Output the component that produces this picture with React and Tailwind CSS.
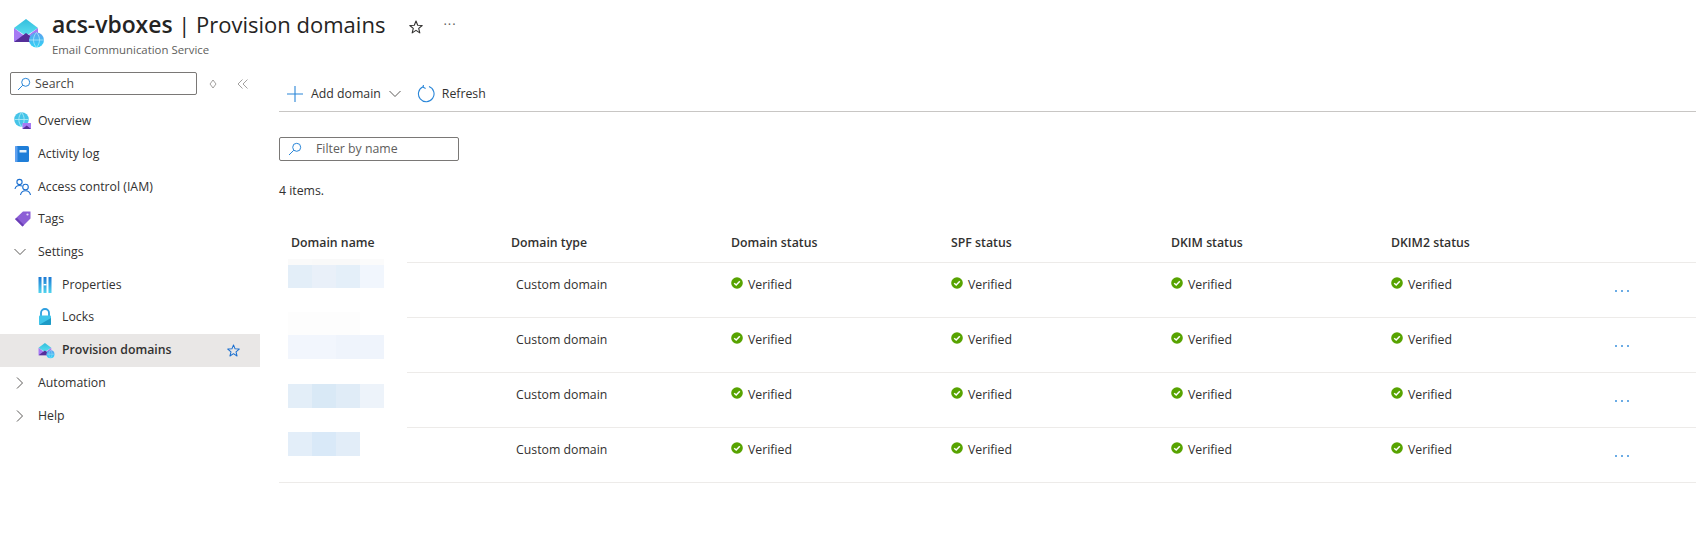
import React from 'react';

const FONT = "font-['Open_Sans','Noto_Sans',sans-serif]";

const ROWS = [
  {
    bands: [
      { top: -4, height: 6, colors: ['#fafafa', '#f9f9f9', '#f9f9f9', '#fbfbfb'] },
      { top: 2, height: 23, colors: ['#e3eef8', '#e9f0f9', '#e4eff9', '#f1f6fd'] },
    ],
  },
  {
    bands: [
      { top: -6, height: 23, colors: ['#fdfdfd', '#fdfdfd', '#fdfdfd', '#ffffff'] },
      { top: 17, height: 24, colors: ['#f2f6fd', '#f2f6fd', '#eff4fc', '#eff4fc'] },
    ],
  },
  { bands: [{ top: 11, height: 24, colors: ['#e3eef8', '#d9e9f6', '#e0ecf7', '#edf3fa'] }] },
  { bands: [{ top: 4, height: 24, colors: ['#e3eef9', '#d9e9f8', '#e2edf8'] }] },
];

function EmailIcon({ size = 32 }) {
  return (
    <svg width={size} height={size} viewBox="0 0 32 32" className="shrink-0">
      <defs>
        <linearGradient id="flap" x1="0" y1="0" x2="0" y2="1">
          <stop offset="0" stopColor="#32bedd" />
          <stop offset="1" stopColor="#5ee0f0" />
        </linearGradient>
        <linearGradient id="globe" x1="0" y1="0" x2="0" y2="1">
          <stop offset="0" stopColor="#5ea0ef" />
          <stop offset="1" stopColor="#32d4f5" />
        </linearGradient>
      </defs>
      <path d="M1 11 L13 2 L25 11 L13 19 Z" fill="url(#flap)" />
      <path d="M1 11 L13 20 L25 11 V25 H2 a1 1 0 0 1 -1 -1 Z" fill="#a67af4" />
      <path d="M1 25 L13 16 L25 25 Z" fill="#552f99" />
      <circle cx="23.5" cy="23" r="7.5" fill="url(#globe)" />
      <path d="M16 23 H31 M23.5 15.5 C19.5 20 19.5 26 23.5 30.5 C27.5 26 27.5 20 23.5 15.5" fill="none" stroke="#b8ecfa" strokeWidth="0.7" />
    </svg>
  );
}

function OverviewIcon() {
  return (
    <svg width="18" height="18" viewBox="0 0 18 18">
      <circle cx="7.5" cy="7.5" r="7.3" fill="#45c4e8" />
      <path d="M0.5 7.5 H14.5 M7.5 0.5 C4 4 4 11 7.5 14.5 C11 11 11 4 7.5 0.5" fill="none" stroke="#b5ecf8" strokeWidth="0.8" />
      <path d="M8.5 11 H17 V17 H8.5 Z" fill="#a67af4" />
      <path d="M8.5 17 L12.7 13.5 L17 17 Z" fill="#552f99" />
    </svg>
  );
}

function ActivityIcon() {
  return (
    <svg width="16" height="18" viewBox="0 0 16 18">
      <rect x="1" y="1" width="14" height="16" rx="1.5" fill="#1f7ed8" />
      <rect x="1" y="1" width="2.5" height="16" rx="1" fill="#5ea0ef" />
      <rect x="5.5" y="5" width="7" height="2.5" fill="#e6f2fb" />
    </svg>
  );
}

function AccessIcon() {
  return (
    <svg width="18" height="18" viewBox="0 0 18 18" fill="none" stroke="#1a6fd0" strokeWidth="1.1">
      <circle cx="5.5" cy="4" r="2.6" />
      <path d="M1 11 C1.5 8.5 3.5 7.5 5.5 7.5 C6.5 7.5 7.2 7.7 8 8.1" />
      <circle cx="11.5" cy="9" r="2.8" />
      <path d="M6.5 17 C7 14 9 12.7 11.5 12.7 C14 12.7 16 14 16.5 17" />
    </svg>
  );
}

function TagIcon() {
  return (
    <svg width="18" height="18" viewBox="0 0 18 18">
      <path d="M1 9 L9 1.5 H16.5 V8.5 L8.5 16.5 Z" fill="#8c5fd6" />
      <path d="M1 9 L8.5 16.5 L10 15 L3 8 Z" fill="#6a3fb5" />
      <circle cx="13.5" cy="4.5" r="1.1" fill="#e6dcf7" />
    </svg>
  );
}

function PropertiesIcon() {
  return (
    <svg width="14" height="18" viewBox="0 0 14 18">
      <defs>
        <linearGradient id="bars" x1="0" y1="0" x2="0" y2="1">
          <stop offset="0" stopColor="#1b78d4" />
          <stop offset="1" stopColor="#50d4ee" />
        </linearGradient>
      </defs>
      <rect x="0.5" y="1" width="3" height="16" fill="url(#bars)" />
      <rect x="5.5" y="1" width="3" height="16" fill="url(#bars)" />
      <rect x="10.5" y="1" width="3" height="16" fill="url(#bars)" />
      <rect x="5.5" y="8" width="3" height="1.4" fill="#ffffff" />
    </svg>
  );
}

function LockIcon() {
  return (
    <svg width="14" height="18" viewBox="0 0 14 18">
      <path d="M3 8 V5 a4 4 0 0 1 8 0 V8" fill="none" stroke="#2f9fe0" strokeWidth="1.8" />
      <rect x="1" y="7.5" width="12" height="9.5" rx="1" fill="#3fc5ea" />
      <path d="M1 17 L13 10 V16 a1 1 0 0 1 -1 1 Z" fill="#1d9ac6" />
    </svg>
  );
}

function SearchIcon({ className = '' }) {
  return (
    <svg width="14" height="14" viewBox="0 0 14 14" fill="none" stroke="#2a86d8" strokeWidth="1" className={className}>
      <circle cx="8.7" cy="5.3" r="4" />
      <path d="M5.8 8.2 L1 13" />
    </svg>
  );
}

function ChevronDown({ size = 12, color = '#4a4846' }) {
  return (
    <svg width={size} height={size} viewBox="0 0 12 12" fill="none" stroke={color} strokeWidth="0.9">
      <path d="M0.5 3 L6 8.5 L11.5 3" />
    </svg>
  );
}

function ChevronRight() {
  return (
    <svg width="12" height="12" viewBox="0 0 12 12" fill="none" stroke="#4a4846" strokeWidth="0.9">
      <path d="M3 0.5 L8.5 6 L3 11.5" />
    </svg>
  );
}

function Star({ color = '#323130', size = 14 }) {
  return (
    <svg width={size} height={size} viewBox="0 0 14 14" fill="none" stroke={color} strokeWidth="1.1" strokeLinejoin="round">
      <path d="M7 1 L8.7 5.2 L13.2 5.5 L9.7 8.4 L10.8 12.9 L7 10.4 L3.2 12.9 L4.3 8.4 L0.8 5.5 L5.3 5.2 Z" />
    </svg>
  );
}

function VerifiedIcon() {
  return (
    <svg width="12" height="12" viewBox="0 0 12 12" className="mt-[2px] shrink-0">
      <circle cx="6" cy="6" r="5.8" fill="#57a300" />
      <path d="M3.2 6.2 L5.2 8 L8.8 4.2" fill="none" stroke="#ffffff" strokeWidth="1.5" />
    </svg>
  );
}

function Status() {
  return (
    <div className="flex items-start gap-[5px] text-[#323130]">
      <VerifiedIcon />
      <span>Verified</span>
    </div>
  );
}

function NavItem({ icon, label, sub, active, chevron }) {
  return (
    <div className={`flex h-[32.7px] items-center ${sub ? 'pl-[38px]' : 'pl-[14px]'} ${active ? 'bg-[#e9e7e6] font-semibold' : ''}`}>
      <span className="flex w-[24px] shrink-0 items-center justify-start">{chevron || icon}</span>
      <span className="flex-1 text-[#323130]">{label}</span>
      {active && (
        <span className="mr-[20px] flex">
          <Star color="#1a6fd0" size={13} />
        </span>
      )}
    </div>
  );
}

function Redacted({ bands }) {
  return (
    <div className="absolute left-0 top-[-1px] h-[55px] w-[128px] bg-white">
      {bands.map((band, i) => (
        <div key={i} className="absolute left-[9px] flex" style={{ top: band.top + 1, height: band.height }}>
          {band.colors.map((c, j) => (
            <div key={j} className="h-full w-[24px]" style={{ background: c }} />
          ))}
        </div>
      ))}
    </div>
  );
}

const COLS = 'grid grid-cols-[220px_220px_220px_220px_220px_223px_1fr] pl-[12px]';

export default function App() {
  return (
    <div className={`${FONT} h-[553px] w-[1696px] overflow-hidden bg-white text-[12.3px] leading-[20px] text-[#323130]`}>
      {/* Header */}
      <div className="flex h-[64px] items-start pl-[13px] pt-[14px]">
        <div className="mt-[3px]">
          <EmailIcon />
        </div>
        <div className="ml-[7px] mt-[-4px]">
          <div className="text-[22px] leading-[28px] text-[#252423]">
            <span className="text-[22.9px] font-semibold">acs-vboxes</span> | Provision domains
          </div>
          <div className="mt-[3px] text-[11.4px] leading-[16px] text-[#605e5c]">Email Communication Service</div>
        </div>
        <div className="ml-[24px] flex items-center">
          <Star />
          <span className="mb-[6px] ml-[20px] text-[13px] tracking-[1px] text-[#605e5c]">···</span>
        </div>
      </div>

      <div className="flex">
        {/* Sidebar */}
        <div className="w-[260px] shrink-0">
          <div className="flex items-center pl-[10px] pt-[8px]">
            <div className="flex h-[23px] w-[187px] items-center gap-[4px] rounded-[2px] border border-[#7a7876] pl-[6px] text-[#4a4846]">
              <SearchIcon />
              <span>Search</span>
            </div>
            <svg width="8" height="10" viewBox="0 0 8 10" fill="none" stroke="#8a8886" strokeWidth="0.8" className="ml-[12px]">
              <path d="M4 1 L7 5 L4 9 L1 5 Z" />
            </svg>
            <svg width="12" height="10" viewBox="0 0 12 10" fill="none" stroke="#8a8886" strokeWidth="0.8" className="ml-[20px]">
              <path d="M5.5 0.5 L1 5 L5.5 9.5 M10.5 0.5 L6 5 L10.5 9.5" />
            </svg>
          </div>
          <div className="mt-[10px]">
            <NavItem icon={<OverviewIcon />} label="Overview" />
            <NavItem icon={<ActivityIcon />} label="Activity log" />
            <NavItem icon={<AccessIcon />} label="Access control (IAM)" />
            <NavItem icon={<TagIcon />} label="Tags" />
            <NavItem chevron={<ChevronDown />} label="Settings" />
            <NavItem sub icon={<PropertiesIcon />} label="Properties" />
            <NavItem sub icon={<LockIcon />} label="Locks" />
            <NavItem sub active icon={<EmailIcon size={17} />} label="Provision domains" />
            <NavItem chevron={<ChevronRight />} label="Automation" />
            <NavItem chevron={<ChevronRight />} label="Help" />
          </div>
        </div>

        {/* Main */}
        <div className="ml-[19px] flex-1">
          <div className="mt-[13px] flex h-[35px] items-center border-b border-[#c8c6c4] pl-[8px]">
            <svg width="16" height="16" viewBox="0 0 16 16" fill="none" stroke="#2a86d8" strokeWidth="1.1">
              <path d="M8 0 V16 M0 8 H16" />
            </svg>
            <span className="ml-[8px]">Add domain</span>
            <span className="ml-[8px] flex">
              <ChevronDown />
            </span>
            <svg width="18" height="18" viewBox="0 0 18 18" fill="none" stroke="#2a86d8" strokeWidth="1.1" className="ml-[16px]">
              <path d="M6 1.8 A7.8 7.8 0 1 0 12 1.6" />
              <path d="M6.4 0 L6.2 2.2 L8.6 3.4" />
            </svg>
            <span className="ml-[7px]">Refresh</span>
          </div>

          <div className="mt-[25px] flex h-[24px] w-[180px] items-center rounded-[2px] border border-[#7a7876] pl-[8px] text-[#605e5c]">
            <SearchIcon />
            <span className="ml-[14px]">Filter by name</span>
          </div>

          <div className="mt-[20px]">4 items.</div>

          <div className={`${COLS} mt-[19px] h-[43px] items-center border-b border-[#edebe9] pt-[3px] font-semibold`}>
            <div>Domain name</div>
            <div>Domain type</div>
            <div>Domain status</div>
            <div>SPF status</div>
            <div>DKIM status</div>
            <div>DKIM2 status</div>
          </div>

          {ROWS.map((row, i) => (
            <div key={i} className={`${COLS} relative h-[55px] border-b border-[#edebe9] pt-[12px]`}>
              <Redacted bands={row.bands} />
              <div />
              <div className="pl-[5px]">Custom domain</div>
              <Status />
              <Status />
              <Status />
              <Status />
              <div className="flex gap-[4px] pt-[15px] pl-[1px]">
                <span className="h-[2px] w-[2px] rounded-full bg-[#3a90dd]" />
                <span className="h-[2px] w-[2px] rounded-full bg-[#3a90dd]" />
                <span className="h-[2px] w-[2px] rounded-full bg-[#3a90dd]" />
              </div>
            </div>
          ))}
        </div>
      </div>
    </div>
  );
}
